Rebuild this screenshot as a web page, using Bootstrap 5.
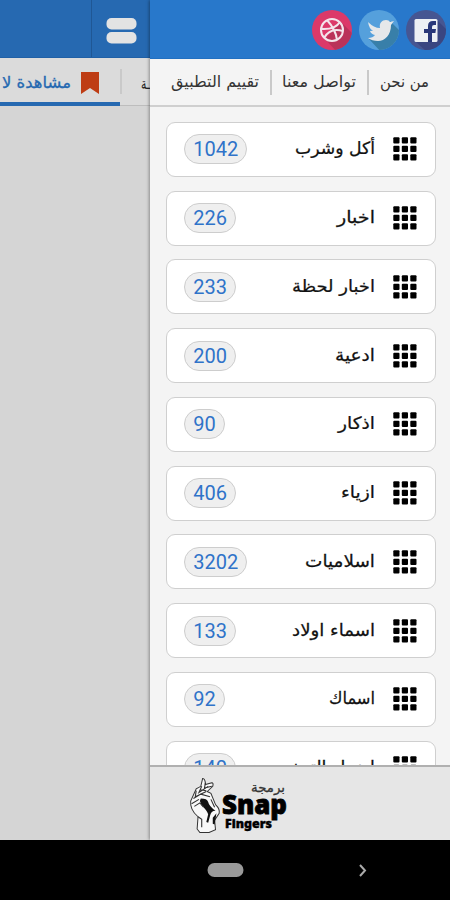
<!DOCTYPE html>
<html lang="ar">
<head>
<meta charset="utf-8">
<meta name="viewport" content="width=device-width, initial-scale=1">
<title>Snap Fingers</title>
<link rel="stylesheet" href="https://cdn.jsdelivr.net/npm/bootstrap@5.3.0/dist/css/bootstrap.min.css">
<style>
body{font-family:"DejaVu Sans","Noto Sans",sans-serif;background:#000;color:#111}
svg{display:block;flex:none}
.screen{width:450px;height:900px}
.app{height:840px}
.backdrop{width:150px;background:#d5d5d5}
.shade-head{height:58px;background:#2669b1;border-bottom:1px solid #2060a6}
.shade-head .brand{width:92px;border-right:1px solid #1f5795}
.tabs{height:48px;background:#dbdbdb;border-bottom:1px solid #bdbdbd}
.tabs .current{width:120px;flex:none;height:48px;border-bottom:4px solid #2669b1;padding:6px 21px 0 0;gap:10px}
.tabs .next{width:28px}
.rule{width:2px;height:25px;background:#c9c9c9;flex:none}
.panel{width:300px;background:#f4f4f4;box-shadow:-1px 0 3px rgba(0,0,0,.35);z-index:1}
.panel-head{height:59px;background:#2878cb;border-bottom:1px solid #2170c2;padding:2px 4px 0 0;gap:7px}
.links{height:48px;border-bottom:2px solid #cfcfcf;padding:2px 21px 0 20px}
.rows{padding:15px 14px 0 16px;gap:13.75px;height:659px}
.entry{height:55px;flex:none;background:#fff;border:1.5px solid #cfcfcf;border-radius:9px;padding:0 18px 0 17px}
.count{height:30px;border:1.5px solid #cdcdcd;border-radius:15px;background:#efefef;color:#2f73c9;font:20px/29px Roboto,sans-serif;padding:0 8.2px}
.dots{margin-left:18px}
.foot{height:75px;background:#e6e6e6;border-top:2px solid #b0b0b0;padding-left:36px}
.sysbar{height:60px;background:#000;padding-left:207px}
</style>
</head>
<body>
<div class="screen d-flex flex-column overflow-hidden">
 <div class="app d-flex overflow-hidden">
  <aside class="backdrop flex-shrink-0">
   <div class="shade-head d-flex">
    <div class="brand"></div>
    <div class="flex-grow-1 d-flex justify-content-center align-items-center pt-1"><svg width="31" height="26"><rect x=".5" y="0" width="30" height="11.5" rx="5" fill="#e3e3e3"/><rect x=".5" y="14" width="30" height="11.5" rx="5" fill="#e3e3e3"/></svg></div>
   </div>
   <div class="tabs d-flex align-items-center">
    <div class="current d-flex align-items-center justify-content-end overflow-hidden"><svg width="70" height="30"><text data-w="69" x="70" y="20" font-size="16" text-anchor="end" fill="#2669b1" stroke="#2669b1" stroke-width=".3">مشاهدة لا</text></svg><svg width="18" height="22"><path d="M0 0h18v22l-9-6-9 6z" fill="#be3c14"/></svg></div>
    <div class="rule"></div>
    <div class="next d-flex justify-content-end overflow-hidden pt-1"><svg width="9" height="30"><text data-w="9" x="9" y="20" font-size="15" text-anchor="end" fill="#222">ـة</text></svg></div>
   </div>
  </aside>
  <section class="panel d-flex flex-column flex-shrink-0">
   <header class="panel-head d-flex align-items-center justify-content-end">
    <svg width="40" height="40" viewBox="0 0 40 40"><defs><clipPath id="c"><circle cx="20" cy="20" r="20"/></clipPath></defs><g clip-path="url(#c)"><path fill="#dc3969" d="M0 0h40v40H0z"/><path d="m29 12 15 15-7 15H25L13 29z" fill="#ba3259"/></g><g fill="none" stroke="#f3e5eb" stroke-width="2"><circle cx="20" cy="20" r="11"/><path d="M15 10q9 10 10 20M9 19q14 1 19-7M12 28q6-11 19-7"/></g></svg>
    <svg width="40" height="40" viewBox="0 0 40 40"><g clip-path="url(#c)"><path fill="#55a0dc" d="M0 0h40v40H0z"/><path d="m31 11 14 14-6 18H23L10 29l17-3z" fill="#387fa9"/></g><path d="M9 12q6 6 12 6c-1-5 2-8 6-8q3 0 4 2l4-1-3 4c0 10-6 16-13 16q-6 0-10-3 5 0 7-3-4-1-5-4l3-.3q-4-2-5-9z" fill="#e6e8ea"/></svg>
    <svg width="40" height="40" viewBox="0 0 40 40"><g clip-path="url(#c)"><path fill="#465692" d="M0 0h40v40H0z"/><path d="m31 10 14 14-6 18H21L9 31z" fill="#3a4681"/></g><rect x="8.500" y="9" width="23" height="23" rx="1.500" fill="#edf0f4"/><path d="M22 32v-9h-4v-4h4v-3q0-5 5-5h3v4h-2q-2 0-2 2v2h4l-.6 4H26v9z" fill="#293779"/></svg>
   </header>
   <nav class="links d-flex align-items-center justify-content-between">
    <svg width="89" height="32"><text data-w="88" x="89" y="20" font-size="16" text-anchor="end" fill="#333">تقييم التطبيق</text></svg><div class="rule"></div>
    <svg width="74" height="32"><text data-w="74" x="74" y="20" font-size="16" text-anchor="end" fill="#333">تواصل معنا</text></svg><div class="rule"></div>
    <svg width="50" height="32"><text data-w="49" x="50" y="20" font-size="16" text-anchor="end" fill="#333">من نحن</text></svg>
   </nav>
   <main class="rows d-flex flex-column overflow-hidden" id="rows"></main>
   <footer class="foot d-flex align-items-start flex-shrink-0">
    <svg width="104" height="70" viewBox="0 0 104 70">
     <g transform="translate(1 8) scale(.92 .87)">
     <path d="M11 62 12 48Q3 40 4 30l6-14 5-3 2-9q3 0 3 7l7-2q2 0 1 4l-6 6 4 2 5 13q5 5 4 10l-5 8 1 11-7 3H14z" fill="#f8f8f8" stroke="#333" stroke-width="1.100"/>
     <path d="M15 27q7 0 8 4 1 5 8 10-5 0-6 6l-2 8-2-1 2-9q-1-4-7-10l-2-5zM28 49l4-5-2 13-2-1z" fill="#111"/>
     <path d="m16 13-3 7 10-7M10 18l-1 7 12-6M7 27l8-5 10 3M5 33l8-5M8 36l6-4 4 5M12 48l4 3v9M20 9l-1 6 8-2M26 28l4 9M14 17l7 1" fill="none" stroke="#333" stroke-width="1.200"/>
     </g>
     <text data-w="34" x="99" y="25" font-size="13" text-anchor="end" fill="#333" stroke="#333" stroke-width=".3">برمجة</text>
     <text data-w="65" x="101" y="47" font-size="26" font-weight="900" text-anchor="end" font-family="Noto Sans" stroke="#000" stroke-width=".8">Snap</text>
     <text data-w="47" x="86" y="61" font-size="11.500" font-weight="900" text-anchor="end" font-family="Noto Sans" stroke="#000" stroke-width=".4">Fingers</text>
    </svg>
   </footer>
  </section>
 </div>
 <div class="sysbar d-flex align-items-center flex-shrink-0"><svg width="170" height="20"><rect x=".5" y="3" width="36" height="14" rx="7" fill="#999"/><path d="m153 5 5 5.500-5 5.500" fill="none" stroke="#aaa" stroke-width="2"/></svg></div>
</div>
<script>
const items=[["أكل وشرب",1042,80],["اخبار",226,38],["اخبار لحظة",233,83],["ادعية",200,40],["اذكار",90,37],["ازياء",406,34],["اسلاميات",3202,70],["اسماء اولاد",133,83],["اسماك",92,46],["اضرار التدخين",140,103]];
let dots="";
for(let r=0;r<3;r++)for(let c=0;c<3;c++)dots+=`<rect x="${c*8.5+.3}" y="${r*8.5+.3}" width="6.2" height="6.2" rx="1"/>`;
document.getElementById("rows").innerHTML=items.map(([t,n,w])=>`<div class="entry d-flex align-items-center"><span class="count">${n}</span><svg class="ms-auto" width="110" height="36"><text data-w="${w}" x="110" y="23" font-size="17" text-anchor="end" fill="#111" stroke="#111" stroke-width=".25">${t}</text></svg><svg class="dots" width="24" height="24">${dots}</svg></div>`).join("");
document.querySelectorAll("text[data-w]").forEach(t=>{
 const w=t.getComputedTextLength(),x=+t.getAttribute("x"),k=t.dataset.w/w;
 t.setAttribute("transform",`translate(${x} 0) scale(${k} 1)`);
 t.setAttribute("x",0);
});
</script>
<script src="https://cdn.jsdelivr.net/npm/bootstrap@5.3.0/dist/js/bootstrap.bundle.min.js"></script>
</body>
</html>
